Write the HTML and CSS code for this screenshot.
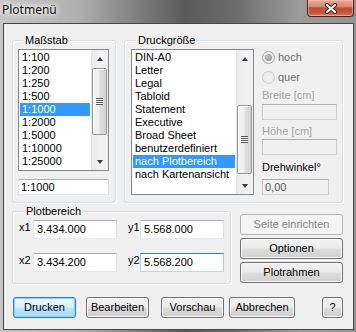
FILE: index.html
```html
<!DOCTYPE html>
<html lang="de">
<head>
<meta charset="utf-8">
<title>Plotmenü</title>
<link rel="stylesheet" href="styles.css">
</head>
<body>
<div class="window">
  <div class="titlebar">
    <span class="title">Plotmenü</span>
    <div class="close">
      <svg width="14" height="11" viewBox="0 0 14 11">
        <path d="M3 2 L11 9 M11 2 L3 9" stroke="#3b2622" stroke-width="4.2" stroke-linecap="round"/>
        <path d="M3 2 L11 9 M11 2 L3 9" stroke="#ffffff" stroke-width="2.2" stroke-linecap="round"/>
      </svg>
    </div>
  </div>
  <div class="client">
    <div class="row-top">
      <div class="group g-scale">
        <span class="legend">Maßstab</span>
        <div class="listbox lb-scale">
          <ul class="items">
            <li>1:100</li>
            <li>1:200</li>
            <li>1:250</li>
            <li>1:500</li>
            <li class="sel">1:1000</li>
            <li>1:2000</li>
            <li>1:5000</li>
            <li>1:10000</li>
            <li>1:25000</li>
          </ul>
          <div class="vscroll">
            <div class="arrow up"></div>
            <div class="track"><div class="thumb" style="margin-top:1px;height:67px"><span class="grip"></span></div></div>
            <div class="arrow down"></div>
          </div>
        </div>
        <div class="edit e-scale">1:1000</div>
      </div>
      <div class="group g-size">
        <span class="legend">Druckgröße</span>
        <div class="size-body">
          <div class="listbox lb-size">
            <ul class="items">
              <li>DIN-A0</li>
              <li>Letter</li>
              <li>Legal</li>
              <li>Tabloid</li>
              <li>Statement</li>
              <li>Executive</li>
              <li>Broad Sheet</li>
              <li>benutzerdefiniert</li>
              <li class="sel">nach Plotbereich</li>
              <li>nach Kartenansicht</li>
            </ul>
            <div class="vscroll">
              <div class="arrow up"></div>
              <div class="track"><div class="thumb" style="margin-top:38px;height:69px"><span class="grip"></span></div></div>
              <div class="arrow down"></div>
            </div>
          </div>
          <div class="orient">
            <label class="radio-row r-hoch"><span class="radio checked"></span><span>hoch</span></label>
            <label class="radio-row r-quer"><span class="radio"></span><span>quer</span></label>
            <span class="dim-label l-breite">Breite [cm]</span>
            <div class="edit disabled e-breite"></div>
            <span class="dim-label l-hoehe">Höhe [cm]</span>
            <div class="edit disabled e-hoehe"></div>
            <span class="l-dreh">Drehwinkel°</span>
            <div class="edit readonly e-dreh">0,00</div>
          </div>
        </div>
      </div>
    </div>
    <div class="row-mid">
      <div class="group g-area">
        <span class="legend">Plotbereich</span>
        <div class="coord-row first">
          <span class="coord-label">x1</span>
          <div class="edit coord">3.434.000</div>
          <span class="coord-label y">y1</span>
          <div class="edit coord">5.568.000</div>
        </div>
        <div class="coord-row second">
          <span class="coord-label">x2</span>
          <div class="edit coord">3.434.200</div>
          <span class="coord-label y">y2</span>
          <div class="edit coord focus">5.568.200</div>
        </div>
      </div>
      <div class="side-buttons">
        <button class="btn disabled">Seite einrichten</button>
        <button class="btn">Optionen</button>
        <button class="btn">Plotrahmen</button>
      </div>
    </div>
    <div class="row-bottom">
      <button class="btn default b-drucken">Drucken</button>
      <button class="btn b-bearbeiten">Bearbeiten</button>
      <button class="btn b-vorschau">Vorschau</button>
      <button class="btn b-abbrechen">Abbrechen</button>
      <button class="btn b-help">?</button>
    </div>
  </div>
</div>
</body>
</html>
```

FILE: styles.css
```css
* { box-sizing: border-box; margin: 0; padding: 0; }

html, body { width: 356px; height: 332px; overflow: hidden; }

body {
  font-family: "Liberation Sans", Arial, sans-serif;
  font-size: 11px;
  line-height: 13px;
  color: #000;
  background: linear-gradient(to right, #c6c6c6 0%, #b0b0b0 22%, #7a7a7a 40%, #5a5a5a 52%, #6c6c6c 66%, #9c9c9c 84%, #939393 100%);
}

.window {
  width: 356px;
  height: 332px;
  display: flex;
  flex-direction: column;
}

/* ---------- title bar ---------- */
.titlebar {
  height: 23px;
  flex-shrink: 0;
  display: flex;
  align-items: flex-start;
}

.title {
  font-family: "Noto Sans", "Open Sans", sans-serif;
  font-size: 12px;
  line-height: 16px;
  margin: 2px 0 0 2px;
  color: #111;
  text-shadow: 0 0 4px #fff, 0 0 7px #fff, 0 0 10px rgba(255,255,255,.8);
}

.close {
  margin-left: auto;
  margin-right: 2px;
  width: 47px;
  height: 17px;
  border: 1px solid #4c1f17;
  border-top: none;
  border-radius: 0 0 4px 4px;
  background: linear-gradient(#e6a896 0%, #d98a75 40%, #c24a33 50%, #c7523a 78%, #dc7e60 100%);
  box-shadow: inset 0 0 0 1px rgba(255, 215, 200, .45);
  display: flex;
  align-items: center;
  justify-content: center;
}

/* ---------- client ---------- */
.client {
  flex: 1;
  margin: 0 2px 2px 3px;
  border: 1px solid #464646;
  background: #f0f0f0;
  display: flex;
  flex-direction: column;
  padding: 16px 10px 0 8px;
}

.group {
  border: 1px solid #d5dfe5;
  border-radius: 3px;
  display: flex;
  flex-direction: column;
  box-shadow: inset 1px 1px 0 #fff, 1px 1px 0 #fff;
}

.legend {
  align-self: flex-start;
  margin: -7px 0 0 5px;
  padding: 0 2px;
  background: #f0f0f0;
  line-height: 13px;
}

.row-top {
  display: flex;
  gap: 8px;
  height: 163px;
  flex-shrink: 0;
}

.g-scale { width: 104px; padding: 0 6px 0 5px; }
.g-size { width: 219px; padding: 0 5px 0 6px; }

/* ---------- list boxes ---------- */
.listbox {
  border: 1px solid #828790;
  background: #fff;
  display: flex;
}

.lb-scale { margin-top: 2px; width: 91px; height: 122px; }
.lb-size { width: 123px; height: 146px; }

.items {
  list-style: none;
  flex: 1;
  padding: 1px;
  overflow: hidden;
}

.items li {
  height: 13px;
  line-height: 13px;
  padding-left: 2px;
  white-space: nowrap;
}

.items li.sel { background: #3399ff; color: #fff; }

.vscroll {
  width: 17px;
  flex-shrink: 0;
  display: flex;
  flex-direction: column;
  background: linear-gradient(to right, #e3e3e3 0, #ececec 2px, #f2f2f2 60%, #f0f0f0 100%);
}

.arrow {
  height: 17px;
  flex-shrink: 0;
  display: flex;
  align-items: center;
  justify-content: center;
}

.arrow::after {
  content: "";
  width: 0;
  height: 0;
  border-left: 3.5px solid transparent;
  border-right: 3.5px solid transparent;
}

.arrow.up::after { border-bottom: 4px solid #3c3c3c; }
.arrow.down::after { border-top: 4px solid #3c3c3c; }

.track { flex: 1; display: flex; flex-direction: column; }

.thumb {
  margin-left: 1px;
  margin-right: 1px;
  border: 1px solid #979797;
  border-radius: 2px;
  background: linear-gradient(to right, #f6f6f6 0%, #ededed 45%, #dedede 55%, #d2d2d2 100%);
  box-shadow: inset 1px 1px 0 #fdfdfd;
  display: flex;
  align-items: center;
  justify-content: center;
}

.grip {
  width: 7px;
  height: 7px;
  background: repeating-linear-gradient(to bottom, #5a5a5a 0 1px, #f4f4f4 1px 2px);
}

/* ---------- edits ---------- */
.edit {
  height: 16px;
  border: 1px solid;
  border-color: #abadb3 #dbdfe6 #e3e9ef #e2e3ea;
  background: #fff;
  padding-left: 2px;
  line-height: 14px;
  white-space: nowrap;
}

.edit.disabled { background: #f0f0f0; border-color: #afafaf #c9c9c9 #d0d0d0 #c9c9c9; }
.edit.readonly { background: #f0f0f0; border-color: #afafaf #c9c9c9 #d0d0d0 #c9c9c9; color: #555; }
.edit.focus { border-color: #3d7bad #a4c9e3 #b7d9ed #b5cfe7; }

.e-scale { margin-top: 8px; width: 91px; }

/* ---------- orientation column ---------- */
.size-body { display: flex; margin-top: 2px; }

.orient {
  margin-left: 8px;
  width: 75px;
  display: flex;
  flex-direction: column;
  align-items: flex-start;
}

.radio-row {
  display: flex;
  align-items: center;
  height: 13px;
  color: #6d6d6d;
}

.radio {
  width: 13px;
  height: 13px;
  border-radius: 50%;
  border: 1px solid #b9b9b9;
  background: radial-gradient(circle at 50% 50%, #f4f4f4 0, #ececec 60%, #e2e2e2 100%);
  margin-right: 3px;
  display: flex;
  align-items: center;
  justify-content: center;
}

.radio.checked { border-color: #a8a8a8; }
.radio.checked::after {
  content: "";
  width: 7px;
  height: 7px;
  border-radius: 50%;
  background: radial-gradient(circle at 40% 35%, #c4c4c4 0, #9a9a9a 70%, #8c8c8c 100%);
}

.r-hoch { margin-top: 2px; }
.r-quer { margin-top: 7px; }
.r-quer .radio { border-color: #cdcdcd; }

.dim-label { color: #a3a3a3; }
.l-breite { margin-top: 5px; }
.e-breite { margin-top: 2px; width: 75px; }
.l-hoehe { margin-top: 5px; }
.e-hoehe { margin-top: 1px; width: 75px; }
.l-dreh { margin-top: 6px; }
.e-dreh { margin-top: 5px; width: 67px; }

/* ---------- middle row ---------- */
.row-mid {
  display: flex;
  margin-top: 8px;
  height: 73px;
  flex-shrink: 0;
}

.g-area { width: 219px; padding: 0 6px; }

.coord-row { display: flex; align-items: flex-start; }
.coord-row.first { margin-top: 2px; }
.coord-row.second { margin-top: 14px; }

.coord-label { width: 14px; margin-top: 1px; }
.coord-label.y { width: 12px; margin-left: 11px; }

.edit.coord { width: 84px; height: 19px; line-height: 17px; padding-left: 3px; }

.side-buttons {
  margin-left: 9px;
  width: 103px;
  margin-top: 3px;
  display: flex;
  flex-direction: column;
  gap: 3px;
}

/* ---------- buttons ---------- */
.btn {
  height: 21px;
  border: 1px solid #707070;
  border-radius: 3px;
  background: linear-gradient(#f2f2f2 0%, #ebebeb 48%, #dddddd 52%, #cfcfcf 100%);
  box-shadow: inset 0 0 0 1px #fbfbfb;
  font: inherit;
  line-height: 19px;
  color: #000;
  text-align: center;
  padding: 0;
}

.btn.disabled {
  border-color: #adb2b5;
  background: #f4f4f4;
  color: #838383;
  box-shadow: none;
}

.btn.default {
  border-color: #3c7fb1;
  background: linear-gradient(#e9f6fd 0%, #d9f0fc 48%, #bee6fd 52%, #a7d9f5 100%);
  box-shadow: inset 0 0 0 1px #8ad1f2, 0 0 1px #7ec4ea;
}

.side-buttons .btn { width: 103px; }

.row-bottom {
  display: flex;
  margin-top: 13px;
  margin-left: 1px;
  height: 21px;
  flex-shrink: 0;
}

.b-drucken { width: 63px; }
.b-bearbeiten { width: 63px; margin-left: 10px; }
.b-vorschau { width: 63px; margin-left: 12px; }
.b-abbrechen { width: 66px; margin-left: 5px; }
.b-help { width: 21px; margin-left: auto; }
```
